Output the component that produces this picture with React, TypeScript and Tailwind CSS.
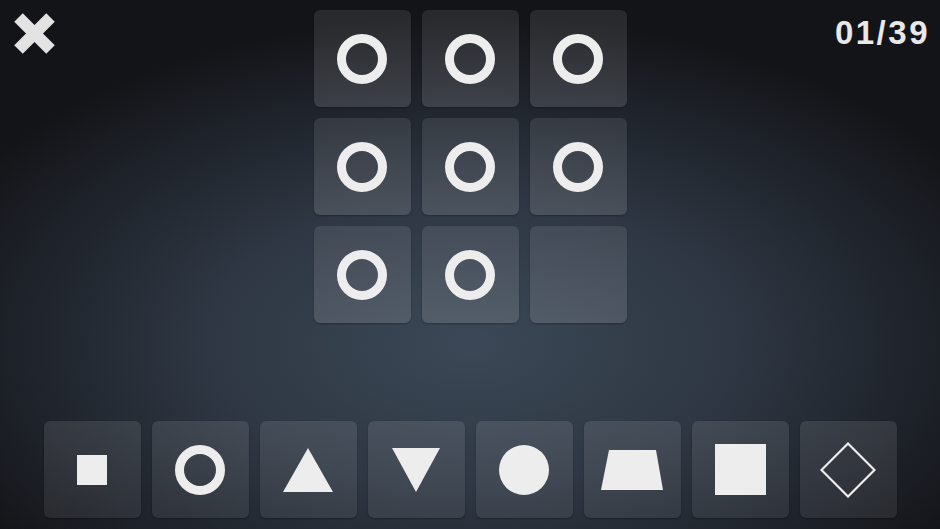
import React from 'react';

type Shape = 'square' | 'ring' | 'triangle' | 'triangleDown' | 'disc' | 'trapezoid' | 'bigSquare' | 'diamond';

const FILL = '#ededed';

function ShapeIcon({ shape }: { shape: Shape }) {
  switch (shape) {
    case 'square':
      return <div className="w-[30px] h-[30px] bg-[#ededed]" />;
    case 'ring':
      return (
        <svg width="50" height="50" viewBox="0 0 50 50">
          <circle cx="25" cy="25" r="20.5" fill="none" stroke={FILL} strokeWidth="9" />
        </svg>
      );
    case 'triangle':
      return (
        <svg width="50" height="44" viewBox="0 0 50 44">
          <polygon points="25,0 50,44 0,44" fill={FILL} />
        </svg>
      );
    case 'triangleDown':
      return (
        <svg width="48" height="44" viewBox="0 0 48 44">
          <polygon points="0,0 48,0 24,44" fill={FILL} />
        </svg>
      );
    case 'disc':
      return <div className="w-[50px] h-[50px] rounded-full bg-[#ededed]" />;
    case 'trapezoid':
      return (
        <svg width="62" height="40" viewBox="0 0 62 40">
          <polygon points="8,0 55,0 62,40 0,40" fill={FILL} />
        </svg>
      );
    case 'bigSquare':
      return <div className="w-[51px] h-[51px] bg-[#ededed]" />;
    case 'diamond':
      return (
        <svg width="56" height="56" viewBox="0 0 56 56">
          <polygon points="28,1.5 54.5,28 28,54.5 1.5,28" fill="none" stroke={FILL} strokeWidth="2.2" />
        </svg>
      );
  }
}

const options: Shape[] = ['square', 'ring', 'triangle', 'triangleDown', 'disc', 'trapezoid', 'bigSquare', 'diamond'];

// 9 cells, last one is the empty slot
const board = [true, true, true, true, true, true, true, true, false];

export default function App() {
  return (
    <div className="w-[940px] h-[529px] overflow-hidden flex flex-col bg-[radial-gradient(ellipse_62%_62%_at_50%_65%,#3c4857_0%,#2e3743_45%,#1d2128_80%,#131418_100%)] font-['Liberation_Sans',sans-serif]">
      <div className="grid grid-cols-[1fr_auto_1fr] pt-[10px]">
        {/* Left: close */}
        <div className="pl-[14px] pt-[3px]">
          <svg width="41" height="41" viewBox="0 0 41 41">
            <line x1="4.5" y1="4.5" x2="36.5" y2="36.5" stroke="#e3e3e3" strokeWidth="12" />
            <line x1="36.5" y1="4.5" x2="4.5" y2="36.5" stroke="#e3e3e3" strokeWidth="12" />
          </svg>
        </div>

        {/* Center: board */}
        <div className="grid grid-cols-[repeat(3,97px)] auto-rows-[97px] gap-[11px]">
          {board.map((filled, i) => (
            <div
              key={i}
              className="rounded-[6px] bg-gradient-to-b from-white/[0.09] to-white/[0.13] shadow-[0_1px_2px_rgba(0,0,0,0.25)] flex items-center justify-center"
            >
              {filled && <ShapeIcon shape="ring" />}
            </div>
          ))}
        </div>

        {/* Right: counter */}
        <div className="flex justify-end pr-[10px] pt-[3px]">
          <span className="text-[33px] leading-[40px] font-bold tracking-[2.5px] text-[#e8e8e8]">01/39</span>
        </div>
      </div>

      {/* Answer choices */}
      <div className="mt-auto mb-[11px] flex justify-center gap-[11px]">
        {options.map((s) => (
          <div
            key={s}
            className="w-[97px] h-[97px] rounded-[6px] bg-gradient-to-b from-white/[0.1] to-white/[0.07] shadow-[0_1px_2px_rgba(0,0,0,0.3)] flex items-center justify-center"
          >
            <ShapeIcon shape={s} />
          </div>
        ))}
      </div>
    </div>
  );
}
